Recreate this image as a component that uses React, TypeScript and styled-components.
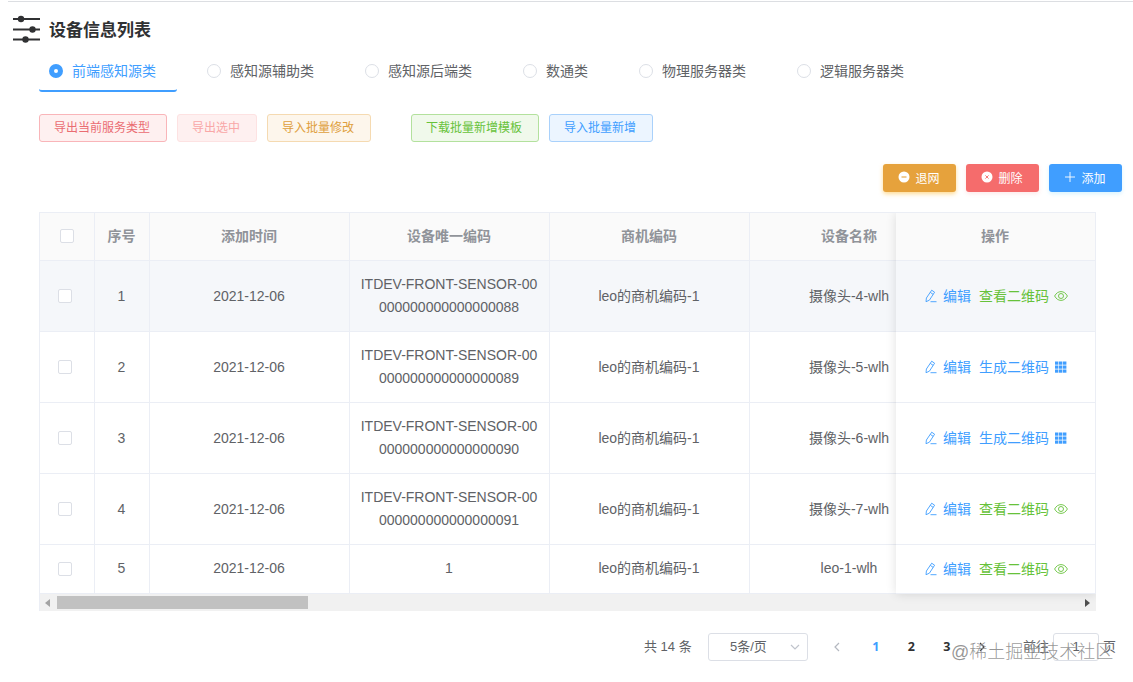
import React from 'react';
import styled, { createGlobalStyle, css } from 'styled-components';

const GlobalStyle = createGlobalStyle`
  *, *::before, *::after { box-sizing: border-box; }
  body {
    margin: 0;
    background: #fff;
    color: #606266;
    font-family: "Liberation Sans", "Noto Sans CJK SC", sans-serif;
    font-size: 14px;
    overflow: hidden;
  }
  button, input { font-family: inherit; }
`;

const Page = styled.main`
  width: 1133px;
  height: 682px;
  padding: 1px 0 0 8px;
  overflow: hidden;
`;

const Panel = styled.section`
  border-top: 1px solid #dcdee2;
  padding-left: 31px;
`;

const TitleBar = styled.header`
  display: flex;
  align-items: flex-start;
  gap: 9px;
  height: 48px;
  margin-left: -26px;
  padding-top: 13px;
`;

const Title = styled.h1`
  margin: 4px 0 0;
  font-size: 17px;
  line-height: 24px;
  font-weight: 700;
  color: #303133;
`;

const Tabs = styled.nav`
  display: flex;
  gap: 20px;
  height: 42px;
`;

const Tab = styled.label<{ $active?: boolean }>`
  display: flex;
  align-items: center;
  gap: 9px;
  height: 42px;
  padding: 2px 21px 0 10px;
  line-height: 20px;
  color: ${p => (p.$active ? '#409eff' : '#606266')};
  border-bottom: 2px solid ${p => (p.$active ? '#409eff' : 'transparent')};
  border-radius: 3px;
`;

const Radio = styled.span<{ $active?: boolean }>`
  width: 14px;
  height: 14px;
  border-radius: 50%;
  background: #fff;
  border: ${p => (p.$active ? '5px solid #409eff' : '1px solid #dcdfe6')};
`;

const ButtonRow = styled.div`
  display: flex;
  gap: 10px;
  margin-top: 22px;
`;

const tones = {
  danger: css`color: #ea6c72; background: #fef0f0; border-color: #f9b5b9;`,
  disabled: css`color: #f9a7a7; background: #fef0f0; border-color: #fde2e2;`,
  warning: css`color: #dfa03c; background: #fdf6ec; border-color: #f5dab1;`,
  success: css`color: #67c23a; background: #f0f9eb; border-color: #b3e19d;`,
  primary: css`color: #409eff; background: #ecf5ff; border-color: #a9d1fb;`,
};

const PlainButton = styled.button<{ $tone: keyof typeof tones; $spaced?: boolean }>`
  height: 28px;
  padding: 0 16px 0 14px;
  margin-left: ${p => (p.$spaced ? '30px' : 0)};
  border: 1px solid;
  border-radius: 3px;
  font-size: 12px;
  line-height: 24px;
  white-space: nowrap;
  ${p => tones[p.$tone]}
`;

const Actions = styled.div`
  display: flex;
  justify-content: flex-end;
  gap: 10px;
  margin: 22px 11px 0 0;
`;

const SolidButton = styled.button<{ $bg: string; $shadow: string }>`
  display: flex;
  align-items: center;
  justify-content: center;
  gap: 5px;
  width: 73px;
  height: 28px;
  padding: 0 1px 2px 0;
  border: 0;
  border-radius: 3px;
  color: #fff;
  font-size: 12px;
  background: ${p => p.$bg};
  box-shadow: 0 2px 4px ${p => p.$shadow};
`;

const TableFrame = styled.div`
  width: 1057px;
  height: 399px;
  margin-top: 20px;
  border: 1px solid #ebeef5;
  border-right: 0;
  border-bottom: 0;
  overflow: hidden;
`;

const TableBody = styled.div`
  display: flex;
`;

const ScrollArea = styled.div`
  flex: 1;
  min-width: 0;
  overflow: hidden;
`;

const FixedColumn = styled.div`
  flex: 0 0 200px;
  position: relative;
  background: #fff;
  box-shadow: 0 0 10px rgba(0, 0, 0, 0.12);
`;

const GridRow = styled.div<{ $height: number; $head?: boolean; $hover?: boolean }>`
  display: grid;
  grid-template-columns: 55px 55px 200px 200px 200px 200px;
  width: max-content;
  height: ${p => p.$height}px;
  background: ${p => (p.$head ? '#fafafa' : p.$hover ? '#f5f7fa' : '#fff')};
  color: ${p => (p.$head ? '#909399' : '#606266')};
  font-weight: ${p => (p.$head ? 700 : 400)};
`;

const FixedRow = styled(GridRow)`
  width: 200px;
  grid-template-columns: 200px;
`;

const Cell = styled.div<{ $raised?: boolean }>`
  display: flex;
  align-items: center;
  justify-content: center;
  padding: 0 11px ${p => (p.$raised ? 2 : 0)}px 10px;
  line-height: 23px;
  text-align: center;
  word-break: break-all;
  border-right: 1px solid #ebeef5;
  border-bottom: 1px solid #ebeef5;
`;

const CheckCell = styled(Cell)<{ $head?: boolean }>`
  padding: 0 ${p => (p.$head ? '0 1px' : '4px 0')} 0;
`;

const OpCell = styled(Cell)`
  justify-content: flex-start;
  padding: 0 0 0 28px;
`;

const CheckBox = styled.span`
  width: 14px;
  height: 14px;
  border: 1px solid #dcdfe6;
  border-radius: 2px;
  background: #fff;
`;

const Link = styled.a<{ $color: string }>`
  display: flex;
  align-items: center;
  gap: 5px;
  margin-right: 8px;
  white-space: nowrap;
  color: ${p => p.$color};
`;

const ScrollBar = styled.div`
  display: flex;
  align-items: center;
  justify-content: space-between;
  height: 17px;
  padding: 0 6px 0 5px;
  background: #f1f1f1;
`;

const ScrollLeft = styled.div`
  display: flex;
  align-items: center;
  gap: 7px;
`;

const Thumb = styled.div`
  width: 251px;
  height: 13px;
  background: #c1c1c1;
`;

const Pagination = styled.footer`
  display: flex;
  align-items: center;
  height: 28px;
  margin-top: 22px;
  padding-left: 605px;
  font-size: 13px;
  line-height: 28px;
  white-space: nowrap;
`;

const Total = styled.span`
  width: 64px;
`;

const PageSize = styled.div`
  display: flex;
  align-items: center;
  justify-content: space-between;
  width: 100px;
  height: 28px;
  padding: 0 7px 1px 21px;
  border: 1px solid #dcdfe6;
  border-radius: 3px;
  margin-right: 11px;
`;

const Pager = styled.span<{ $active?: boolean }>`
  display: flex;
  align-items: center;
  justify-content: center;
  width: 35.5px;
  font-family: "Open Sans", "Noto Sans CJK SC", sans-serif;
  font-size: 12.5px;
  font-weight: 700;
  color: ${p => (p.$active ? '#409eff' : '#303133')};
`;

const PrevPager = styled(Pager)`
  margin-right: 3.5px;
`;

const JumpLabel = styled.span`
  margin: 0 4px 0 23px;
`;

const JumpInput = styled.div`
  width: 46px;
  height: 28px;
  margin-right: 4px;
  border: 1px solid #dcdfe6;
  border-radius: 3px;
  line-height: 26px;
  text-align: center;
`;

const Watermark = styled.div`
  position: absolute;
  left: 951px;
  top: 639px;
  font-size: 18px;
  line-height: 27px;
  font-weight: 300;
  white-space: nowrap;
  color: rgba(110, 110, 110, 0.72);
  text-shadow: 0 0 1px rgba(255, 255, 255, 0.6);
`;

const SettingsIcon = () => (
  <svg width="27" height="28" viewBox="0 0 27 28" fill="#303133">
    <path d="M0 3h27v2H0zM0 13.5h27v2H0zM0 23.5h27v2H0z" />
    <circle cx="8" cy="4" r="3.2" />
    <circle cx="19.5" cy="14.5" r="3.2" />
    <circle cx="12.5" cy="24.5" r="3.2" />
  </svg>
);

const MinusIcon = () => (
  <svg width="12" height="12" viewBox="0 0 12 12">
    <circle cx="6" cy="6" r="5.5" fill="#fff" />
    <path d="M3.5 6h5" stroke="#e6a23c" strokeWidth="1.1" />
  </svg>
);

const CloseIcon = () => (
  <svg width="12" height="12" viewBox="0 0 12 12">
    <circle cx="6" cy="6" r="5.5" fill="#fff" />
    <path d="M4.4 4.4l3.2 3.2M7.6 4.4L4.4 7.6" stroke="#f56c6c" strokeWidth=".9" />
  </svg>
);

const PlusIcon = () => (
  <svg width="12" height="12" viewBox="0 0 12 12">
    <path d="M6 1v10M1 6h10" stroke="#fff" strokeWidth=".9" />
  </svg>
);

const EditIcon = () => (
  <svg width="14" height="14" viewBox="0 0 14 14" fill="none" stroke="currentColor" strokeWidth=".9">
    <path d="M7.7 1.2l2.9 2-5.2 8-3.4 1.5.4-3.7zM6.3 3.4l2.9 2M6.5 12.7h6" />
  </svg>
);

const EyeIcon = () => (
  <svg width="14" height="14" viewBox="0 0 14 14" fill="none" stroke="currentColor" strokeWidth=".9">
    <path d="M.6 7C2.2 4.1 4.4 2.6 7 2.6S11.8 4.1 13.4 7C11.8 9.9 9.6 11.4 7 11.4S2.2 9.9.6 7z" />
    <circle cx="7" cy="7" r="2.5" />
  </svg>
);

const GridIcon = () => (
  <svg width="14" height="14" viewBox="0 0 14 14" fill="currentColor">
    {[1.5, 5.5, 9.5].map(y => [1, 5, 9].map(x => <rect key={`${x}-${y}`} x={x} y={y} width="3.4" height="3.2" />))}
  </svg>
);

const Chevron = ({ d, color }: { d: string; color: string }) => (
  <svg width="10" height="10" viewBox="0 0 10 10" fill="none" stroke={color} strokeWidth="1.2">
    <path d={d} />
  </svg>
);

const Arrow = ({ d, color }: { d: string; color: string }) => (
  <svg width="5" height="8" viewBox="0 0 5 8" fill={color}>
    <path d={d} />
  </svg>
);

const tabs = ['前端感知源类', '感知源辅助类', '感知源后端类', '数通类', '物理服务器类', '逻辑服务器类'];
const headings = ['序号', '添加时间', '设备唯一编码', '商机编码', '设备名称'];
const rows = [
  { code: 'ITDEV-FRONT-SENSOR-00000000000000000088', name: '摄像头-4-wlh', view: true },
  { code: 'ITDEV-FRONT-SENSOR-00000000000000000089', name: '摄像头-5-wlh', view: false },
  { code: 'ITDEV-FRONT-SENSOR-00000000000000000090', name: '摄像头-6-wlh', view: false },
  { code: 'ITDEV-FRONT-SENSOR-00000000000000000091', name: '摄像头-7-wlh', view: true },
  { code: '1', name: 'leo-1-wlh', view: true },
];
const rowHeight = (i: number) => (i === 4 ? 49 : 71);

export default function App() {
  return (
    <Page>
      <GlobalStyle />
      <Panel>
        <TitleBar>
          <SettingsIcon />
          <Title>设备信息列表</Title>
        </TitleBar>
        <Tabs>
          {tabs.map((t, i) => (
            <Tab key={t} $active={i === 0}>
              <Radio $active={i === 0} />
              {t}
            </Tab>
          ))}
        </Tabs>
        <ButtonRow>
          <PlainButton $tone="danger">导出当前服务类型</PlainButton>
          <PlainButton $tone="disabled">导出选中</PlainButton>
          <PlainButton $tone="warning">导入批量修改</PlainButton>
          <PlainButton $tone="success" $spaced>下载批量新增模板</PlainButton>
          <PlainButton $tone="primary">导入批量新增</PlainButton>
        </ButtonRow>
        <Actions>
          <SolidButton $bg="#e6a23c" $shadow="rgba(255,190,60,.55)"><MinusIcon />退网</SolidButton>
          <SolidButton $bg="#f56c6c" $shadow="rgba(245,108,108,.15)"><CloseIcon />删除</SolidButton>
          <SolidButton $bg="#409eff" $shadow="rgba(64,200,255,.2)"><PlusIcon />添加</SolidButton>
        </Actions>
        <TableFrame>
          <TableBody>
            <ScrollArea>
              <GridRow $height={48} $head>
                <CheckCell $head><CheckBox /></CheckCell>
                {headings.map(h => <Cell key={h}>{h}</Cell>)}
              </GridRow>
              {rows.map((r, i) => (
                <GridRow key={r.name} $height={rowHeight(i)} $hover={i === 0}>
                  <CheckCell><CheckBox /></CheckCell>
                  <Cell $raised={i === 4}>{i + 1}</Cell>
                  <Cell $raised={i === 4}>2021-12-06</Cell>
                  <Cell $raised={i === 4}>{r.code}</Cell>
                  <Cell $raised={i === 4}>leo的商机编码-1</Cell>
                  <Cell $raised={i === 4}>{r.name}</Cell>
                </GridRow>
              ))}
            </ScrollArea>
            <FixedColumn>
              <FixedRow $height={48} $head><Cell>操作</Cell></FixedRow>
              {rows.map((r, i) => (
                <FixedRow key={r.name} $height={rowHeight(i)} $hover={i === 0}>
                  <OpCell>
                    <Link $color="#409eff"><EditIcon />编辑</Link>
                    <Link $color={r.view ? '#67c23a' : '#409eff'}>
                      {r.view ? '查看二维码' : '生成二维码'}
                      {r.view ? <EyeIcon /> : <GridIcon />}
                    </Link>
                  </OpCell>
                </FixedRow>
              ))}
            </FixedColumn>
          </TableBody>
          <ScrollBar>
            <ScrollLeft>
              <Arrow d="M5 0v8L0 4z" color="#a3a3a3" />
              <Thumb />
            </ScrollLeft>
            <Arrow d="M0 0v8l5-4z" color="#505050" />
          </ScrollBar>
        </TableFrame>
        <Pagination>
          <Total>共 14 条</Total>
          <PageSize>
            5条/页
            <Chevron d="M1 3l4 4 4-4" color="#c0c4cc" />
          </PageSize>
          <PrevPager><Chevron d="M7 1L3 5l4 4" color="#b4b8c0" /></PrevPager>
          <Pager $active>1</Pager>
          <Pager>2</Pager>
          <Pager>3</Pager>
          <Pager><Chevron d="M3 1l4 4-4 4" color="#303133" /></Pager>
          <JumpLabel>前往</JumpLabel>
          <JumpInput>1</JumpInput>
          页
        </Pagination>
      </Panel>
      <Watermark>@稀土掘金技术社区</Watermark>
    </Page>
  );
}
